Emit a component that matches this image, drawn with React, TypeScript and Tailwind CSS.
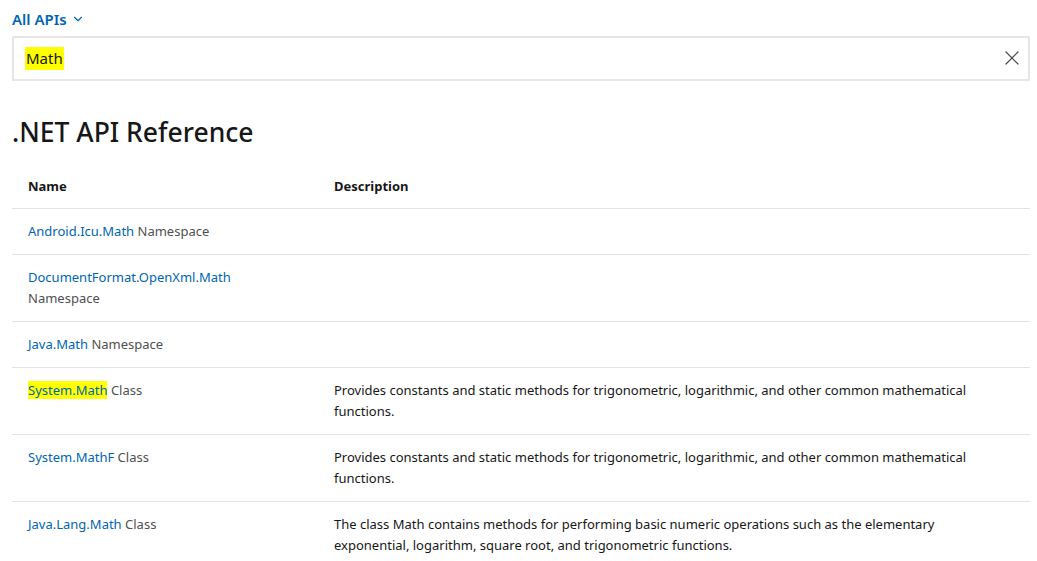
import { X, ChevronDown } from "lucide-react";

type Row = {
  link: string;
  kind: string;
  description?: string;
  highlight?: boolean;
};

const rows: Row[] = [
  { link: "Android.Icu.Math", kind: "Namespace" },
  { link: "DocumentFormat.OpenXml.Math", kind: "Namespace" },
  { link: "Java.Math", kind: "Namespace" },
  {
    link: "System.Math",
    kind: "Class",
    highlight: true,
    description:
      "Provides constants and static methods for trigonometric, logarithmic, and other common mathematical functions.",
  },
  {
    link: "System.MathF",
    kind: "Class",
    description:
      "Provides constants and static methods for trigonometric, logarithmic, and other common mathematical functions.",
  },
  {
    link: "Java.Lang.Math",
    kind: "Class",
    description:
      "The class Math contains methods for performing basic numeric operations such as the elementary exponential, logarithm, square root, and trigonometric functions.",
  },
];

export default function App() {
  return (
    <div
      className="min-h-screen bg-white pl-3 pr-[7px] pt-[8px] text-[#171717]"
      style={{ fontFamily: '"Noto Sans", "Open Sans", sans-serif' }}
    >
      {/* Scope picker */}
      <button className="flex items-center gap-1 text-[15px] font-semibold text-[#0065b3]">
        All APIs
        <ChevronDown className="h-3.5 w-3.5" strokeWidth={2} />
      </button>

      {/* Search */}
      <div className="mt-[5px] flex h-[45px] items-center border-2 border-[#e6e6e6] pl-[11px] pr-[4px]">
        <span className="bg-[#ffff00] px-px pb-[2px] pt-[1px] text-[15px] leading-[20px]">
          Math
        </span>
        <span className="flex-1" />
        <X className="h-6 w-6 text-[#4a4a4a]" strokeWidth={1.2} />
      </div>

      <h1 className="mt-[33px] text-[26.5px] font-medium leading-[36px]">
        .NET API Reference
      </h1>

      <table className="mt-[15px] w-full border-collapse text-[13px] leading-[21px]">
        <thead>
          <tr className="border-b border-[#e3e3e3]">
            <th className="w-[306px] px-4 py-[11px] text-left text-[13px] font-bold">
              Name
            </th>
            <th className="px-4 py-[11px] text-left text-[13px] font-bold">
              Description
            </th>
          </tr>
        </thead>
        <tbody>
          {rows.map((r) => (
            <tr key={r.link} className="border-b border-[#e3e3e3] align-top last:border-b-0">
              <td className="px-4 py-3 text-[#505050]">
                <a
                  className={`text-[#0065b3] ${r.highlight ? "bg-[#ffff00]" : ""}`}
                  href="#"
                >
                  {r.link}
                </a>{" "}
                {r.kind}
              </td>
              <td className="py-3 pl-4 pr-[24px]">{r.description}</td>
            </tr>
          ))}
        </tbody>
      </table>
    </div>
  );
}
